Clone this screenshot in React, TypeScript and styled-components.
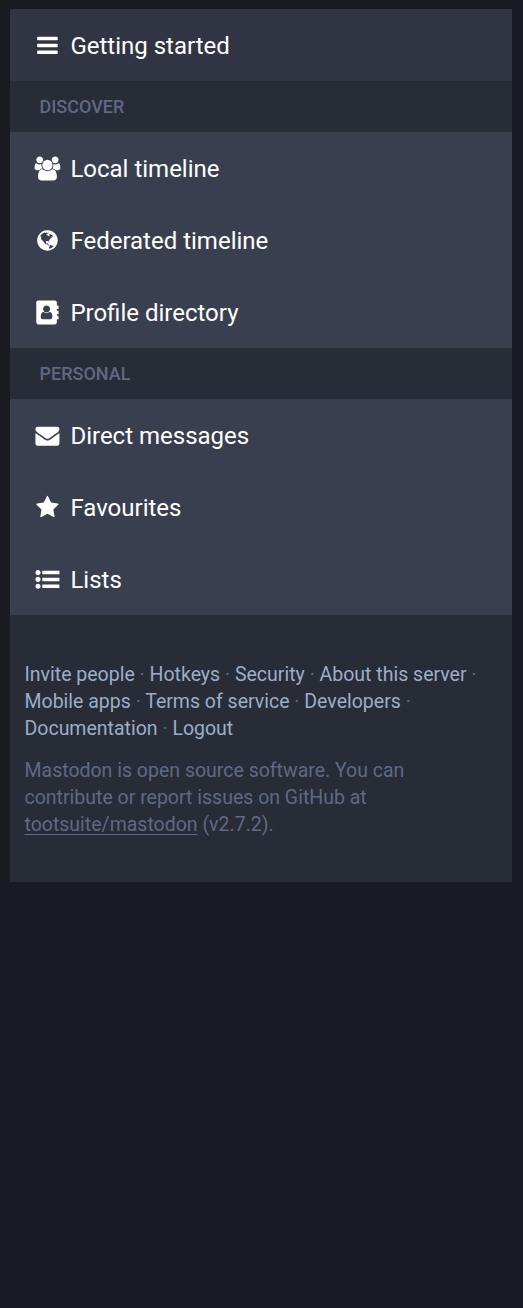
import React from "react";
import styled, { createGlobalStyle } from "styled-components";

const GlobalStyle = createGlobalStyle`
  * { box-sizing: border-box; }
  body { margin: 0; background: #191b22; font-family: Roboto, sans-serif; color: #fff; }
`;
const Page = styled.main`
  min-height: 1308px;
  padding: 9px 11.5px 0 9.5px;
`;
const Column = styled.section`
  background: #282c37;
  height: 873px;
`;
const Item = styled.a<{ $header?: boolean }>`
  display: flex;
  align-items: center;
  height: 72px;
  padding: 2px 22.5px 0;
  background: ${p => (p.$header ? "#313543" : "#393f4f")};
  font-size: 24px;
  line-height: 28px;
`;
const Glyph = styled.svg`
  display: block;
  flex: none;
  width: 32px;
  height: 26px;
  margin-right: 6.4px;
  fill: currentColor;
  fill-rule: evenodd;
`;
const Subheading = styled.h2`
  margin: 0;
  height: 51px;
  padding: 0 30px 1px;
  display: flex;
  align-items: center;
  font-size: 18px;
  font-weight: 500;
  color: #606984;
  text-transform: uppercase;
`;
const Footer = styled.footer`
  padding: 46px 15px;
  font-size: 19.5px;
  line-height: 27px;
  color: #606984;
`;
const Links = styled.p`
  margin: 0 0 15px;
`;
const Link = styled.a`
  color: #9baec8;
`;
const Note = styled.p`
  margin: 0;
`;
const Source = styled.a`
  text-decoration: underline;
  text-decoration-thickness: 1px;
  text-underline-offset: 3px;
  text-decoration-skip-ink: none;
`;

type Shape = { width: number; d: string };

const bars: Shape = {
  width: 1536,
  d: "M1536 1344v128q0 26-19 45t-45 19h-1408q-26 0-45-19t-19-45v-128q0-26 19-45t45-19h1408q26 0 45 19t19 45zm0-512v128q0 26-19 45t-45 19h-1408q-26 0-45-19t-19-45v-128q0-26 19-45t45-19h1408q26 0 45 19t19 45zm0-512v128q0 26-19 45t-45 19h-1408q-26 0-45-19t-19-45v-128q0-26 19-45t45-19h1408q26 0 45 19t19 45z",
};
const users: Shape = {
  width: 1920,
  d: "M593 896q-162 5-265 128h-134q-82 0-138-40.500t-56-118.500q0-353 124-353 6 0 43.500 21t97.500 42.500 119 21.500q67 0 133-23-5 37-5 66 0 139 81 256zm1071 637q0 120-73 189.500t-194 69.500h-874q-121 0-194-69.500t-73-189.500q0-53 3.500-103.500t14-109 26.500-108.500 43-97.500 62-81 85.500-53.500 111.500-20q10 0 43 21.500t73 48 107 48 135 21.500 135-21.500 107-48 73-48 43-21.500q61 0 111.500 20t85.500 53.500 62 81 43 97.500 26.500 108.500 14 109 3.500 103.500zm-1024-1277q0 106-75 181t-181 75-181-75-75-181 75-181 181-75 181 75 75 181zm704 384q0 159-112.500 271.500t-271.500 112.500-271.500-112.500-112.500-271.500 112.500-271.500 271.500-112.500 271.500 112.500 112.500 271.500zm576 225q0 78-56 118.500t-138 40.500h-134q-103-123-265-128 81-117 81-256 0-29-5-66 66 23 133 23 59 0 119-21.500t97.500-42.500 43.500-21q124 0 124 353zm-128-609q0 106-75 181t-181 75-181-75-75-181 75-181 181-75 181 75 75 181z",
};
const globe: Shape = {
  width: 1536,
  d: "M768 128q209 0 385.500 103t279.500 279.500 103 385.500-103 385.500-279.500 279.500-385.500 103-385.500-103-279.500-279.500-103-385.500 103-385.500 279.500-279.500 385.500-103zm274 521q-2 1-9.500 9.500t-13.500 9.500q2 0 4.500-5t5-11 3.500-7q6-7 22-15 14-6 52-12 34-8 51 11-2-2 9.500-13t14.500-12q3-2 15-4.500t15-7.500l2-22q-12 1-17.500-7t-6.500-21q0 2-6 8 0-7-4.500-8t-11.500 1-9 1q-10-3-15-7.500t-8-16.500-4-15q-2-5-9.500-11t-9.500-10q-1-2-2.500-5.500t-3-6.500-4-5.500-5.500-2.500-7 5-7.500 10-4.500 5q-3-2-6-1.500t-4.500 1-4.500 3-5 3.500q-3 2-8.500 3t-8.500 2q15-5-1-11-10-4-16-3 9-4 7.500-12t-8.500-14h5q-1-4-8.500-8.500t-17.500-8.500-13-6q-8-5-34-9.500t-33-.5q-5 6-4.500 10.500t4 14 3.500 12.500q1 6-5.500 13t-6.500 12q0 7 14 15.500t10 21.500q-3 8-16 16t-16 12q-5 8-1.500 18.500t10.500 16.500q2 2 1.500 4t-3.500 4.500-5.500 4-6.500 3.500l-3 2q-11 5-20.500-6t-13.500-26q-7-25-16-30-23-8-29 1-5-13-41-26-25-9-58-4 6-1 0-15-7-15-19-12 3-6 4-17.500t1-13.500q3-13 12-23 1-1 7-8.500t9.500-13.500.5-6q35 4 50-11 5-5 11.500-17t10.500-17q9-6 14-5.500t14.500 5.500 14.500 5q14 1 15.500-11t-7.500-20q12 1 3-17-4-7-8-9-12-4-27 5-8 4 2 8-1-1-9.500 10.500t-16.500 17.500-16-5q-1-1-5.500-13.500t-9.500-13.500q-8 0-16 15 3-8-11-15t-24-8q19-12-8-27-7-4-20.500-5t-19.500 4q-5 7-5.500 11.500t5 8 10.500 5.500 11.500 4 8.500 3q14 10 8 14-2 1-8.500 3.500t-11.500 4.500-6 4q-3 4 0 14t-2 14q-5-5-9-17.500t-7-16.500q7 9-25 6l-10-1q-4 0-16 2t-20.500 1-13.500-8q-4-8 0-20 1-4 4-2-4-3-11-9.500t-10-8.500q-46 15-94 41 6 1 12-1 5-2 13-6.500t10-5.500q34-14 42-7l5-5q14 16 20 25-7-4-30-1-20 6-22 12 7 12 5 18-4-3-11.500-10t-14.500-11-15-5q-16 0-22 1-146 80-235 222 7 7 12 8 4 1 5 9t2.500 11 11.500-3q9 8 3 19 1-1 44 27 19 17 21 21 3 11-10 18-1-2-9-9t-9-4q-3 5 .5 18.500t10.500 12.500q-7 0-9.500 16t-2.500 35.500-1 23.500l2 1q-3 12 5.500 34.500t21.500 19.500q-13 3 20 43 6 8 8 9 3 2 12 7.500t15 10 10 10.500q4 5 10 22.500t14 23.500q-2 6 9.500 20t10.500 23q-1 0-2.500 1t-2.500 1q3 7 15.500 14t15.500 13q1 3 2 10t3 11 8 2q2-20-24-62-15-25-17-29-3-5-5.500-15.500t-4.500-14.500q2 0 6 1.500t8.500 3.500 7.500 4 2 3q-3 7 2 17.500t12 18.500 17 19 12 13q6 6 14 19.500t0 13.500q9 0 20 10.500t17 19.500q5 8 8 26t5 24q2 7 8.500 13.500t12.500 9.500l16 8 13 7q5 2 18.500 10.500t21.500 11.500q10 4 16 4t14.500-2.500 13.500-3.500q15-2 29 15t21 21q36 19 55 11-2 1 .5 7.500t8 15.500 9 14.500 5.500 8.500q5 6 18 15t18 15q6-4 7-9-3 8 7 20t18 10q14-3 14-32-31 15-49-18 0-1-2.500-5.500t-4-8.500-2.500-8.500 0-7.500 5-3q9 0 10-3.500t-2-12.500-4-13q-1-8-11-20t-12-15q-5 9-16 8t-16-9q0 1-1.500 5.500t-1.500 6.500q-13 0-15-1 1-3 2.500-17.500t3.500-22.500q1-4 5.500-12t7.500-14.500 4-12.500-4.500-9.500-17.500-2.500q-19 1-26 20-1 3-3 10.500t-5 11.500-9 7q-7 3-24 2t-24-5q-13-8-22.500-29t-9.500-37q0-10 2.500-26.500t3-25-5.500-24.500q3-2 9-9.500t10-10.500q2-1 4.500-1.500t4.500 0 4-1.500 3-6q-1-1-4-3-3-3-4-3 7 3 28.500-1.500t27.500 1.500q15 11 22-2 0-1-2.500-9.500t-.5-13.500q5 27 29 9 3 3 15.500 5t17.500 5q3 2 7 5.500t5.500 4.500 5-.5 8.500-6.500q10 14 12 24 11 40 19 44 7 3 11 2t4.500-9.500 0-14-1.500-12.500l-1-8v-18l-1-8q-15-3-18.500-12t1.500-18.500 15-18.500q1-1 8-3.500t15.500-6.500 12.500-8q21-19 15-35 7 0 11-9-1 0-5-3t-7.500-5-4.500-2q9-5 2-16 5-3 7.500-11t7.500-10q9 12 21 2 7-8 1-16 5-7 20.500-10.500t18.500-9.500q7 2 8-2t1-12 3-12q4-5 15-9t13-5l17-11q3-4 0-4 18 2 31-11 10-11-6-20 3-6-3-9.500t-15-5.500q3-1 11.500-.5t10.500-1.500q15-10-7-16-17-5-43 12zm-163 877q206-36 351-189-3-3-12.500-4.500t-12.500-3.500q-18-7-24-8 1-7-2.500-13t-8-9-12.500-8-11-7q-2-2-7-6t-7-5.500-7.500-4.500-8.500-2-10 1l-3 1q-3 1-5.500 2.500t-5.500 3-4 3 0 2.500q-21-17-36-22-5-1-11-5.500t-10.500-7-10-1.500-11.500 7q-5 5-6 15t-2 13q-7-5 0-17.500t2-18.500q-3-6-10.500-4.500t-12 4.500-11.500 8.500-9 6.500-8.500 5.500-8.500 7.500q-3 4-6 12t-5 11q-2-4-11.500-6.500t-9.500-5.500q2 10 4 35t5 38q7 31-12 48-27 25-29 40-4 22 12 26 0 7-8 20.500t-7 21.500q0 6 2 16z",
};
const addressBook: Shape = {
  width: 1664,
  d: "M1028 644q0 107-76.500 183t-183.500 76-183.500-76-76.500-183q0-108 76.500-184t183.500-76 183.500 76 76.500 184zm-48 220q46 0 82.500 17t60 47.500 39.500 67 24 81 11.500 82.500 3.500 79q0 67-39.500 118.500t-105.500 51.500h-576q-66 0-105.500-51.500t-39.500-118.500q0-48 4.500-93.500t18.500-98.500 36.500-91.500 63-64.500 93.500-26h5q7 4 32 19.500t35.500 21 33 17 37 16 35 9 39.500 4.500 39.500-4.500 35-9 37-16 33-17 35.500-21 32-19.500zm684-256q0 13-9.500 22.500t-22.500 9.500h-96v128h96q13 0 22.500 9.500t9.500 22.500v192q0 13-9.500 22.500t-22.500 9.500h-96v128h96q13 0 22.500 9.500t9.500 22.500v192q0 13-9.500 22.500t-22.500 9.500h-96v224q0 66-47 113t-113 47h-1216q-66 0-113-47t-47-113v-1472q0-66 47-113t113-47h1216q66 0 113 47t47 113v224h96q13 0 22.500 9.500t9.500 22.500v192z",
};
const envelope: Shape = {
  width: 1792,
  d: "M1792 710v794q0 66-47 113t-113 47h-1472q-66 0-113-47t-47-113v-794q44 49 101 87 362 246 497 345 57 42 92.500 65.500t94.500 48 110 24.500h2q51 0 110-24.500t94.500-48 92.500-65.500q170-123 498-345 57-39 100-87zm0-294q0 79-49 151t-122 123q-376 261-468 325-10 7-42.500 31t-54 38.500-52 32.500-57.500 27-50 9h-2q-23 0-50-9t-57.500-27-52-32.500-54-38.500-42.500-31q-91-64-262-182.500t-205-142.500q-62-42-117-115.500t-55-136.500q0-78 41.500-130t118.500-52h1472q65 0 112.500 47t47.500 113z",
};
const star: Shape = {
  width: 1664,
  d: "M1664 647q0 22-26 48l-363 354 86 500q1 7 1 20 0 21-10.500 35.500t-30.500 14.500q-19 0-40-12l-449-236-449 236q-22 12-40 12-21 0-31.500-14.500t-10.500-35.500q0-6 2-20l86-500-364-354q-25-27-25-48 0-37 56-46l502-73 225-455q19-41 49-41t49 41l225 455 502 73q56 9 56 46z",
};
const list: Shape = {
  width: 1792,
  d: "M384 1408q0 80-56 136t-136 56-136-56-56-136 56-136 136-56 136 56 56 136zm0-512q0 80-56 136t-136 56-136-56-56-136 56-136 136-56 136 56 56 136zm1408 416v192q0 13-9.500 22.500t-22.500 9.500h-1216q-13 0-22.500-9.500t-9.500-22.500v-192q0-13 9.500-22.500t22.500-9.500h1216q13 0 22.500 9.500t9.500 22.500zm-1408-928q0 80-56 136t-136 56-136-56-56-136 56-136 136-56 136 56 56 136zm1408 416v192q0 13-9.500 22.500t-22.500 9.500h-1216q-13 0-22.500-9.500t-9.500-22.500v-192q0-13 9.500-22.500t22.500-9.500h1216q13 0 22.500 9.500t9.500 22.500zm0-512v192q0 13-9.500 22.500t-22.500 9.500h-1216q-13 0-22.500-9.500t-9.500-22.500v-192q0-13 9.500-22.500t22.500-9.500h1216q13 0 22.500 9.500t9.500 22.500z",
};

// Glyphs are drawn on a 1792-unit em and centred in a fixed-width slot.
const SCALE = 24 / 1792;

function Icon({ shape }: { shape: Shape }) {
  const left = 15.43 - (shape.width * SCALE) / 2;
  return (
    <Glyph viewBox="0 0 32 26" aria-hidden>
      <path transform={`translate(${left} 0.43) scale(${SCALE})`} d={shape.d} />
    </Glyph>
  );
}

const sections = [
  {
    title: "Discover",
    items: [
      { label: "Local timeline", shape: users },
      { label: "Federated timeline", shape: globe },
      { label: "Profile directory", shape: addressBook },
    ],
  },
  {
    title: "Personal",
    items: [
      { label: "Direct messages", shape: envelope },
      { label: "Favourites", shape: star },
      { label: "Lists", shape: list },
    ],
  },
];
const links = ["Invite people", "Hotkeys", "Security", "About this server", "Mobile apps", "Terms of service", "Developers", "Documentation", "Logout"];

export default function App() {
  return (
    <Page>
      <GlobalStyle />
      <Column>
        <Item $header><Icon shape={bars} />Getting started</Item>
        {sections.map(section => (
          <React.Fragment key={section.title}>
            <Subheading>{section.title}</Subheading>
            {section.items.map(item => (
              <Item key={item.label}><Icon shape={item.shape} />{item.label}</Item>
            ))}
          </React.Fragment>
        ))}
        <Footer>
          <Links>
            {links.map((label, i) => (
              <React.Fragment key={label}>
                <Link>{label}</Link>
                {i < links.length - 1 && " · "}
              </React.Fragment>
            ))}
          </Links>
          <Note>
            Mastodon is open source software. You can contribute or report issues on GitHub at{" "}
            <Source>tootsuite/mastodon</Source> (v2.7.2).
          </Note>
        </Footer>
      </Column>
    </Page>
  );
}
